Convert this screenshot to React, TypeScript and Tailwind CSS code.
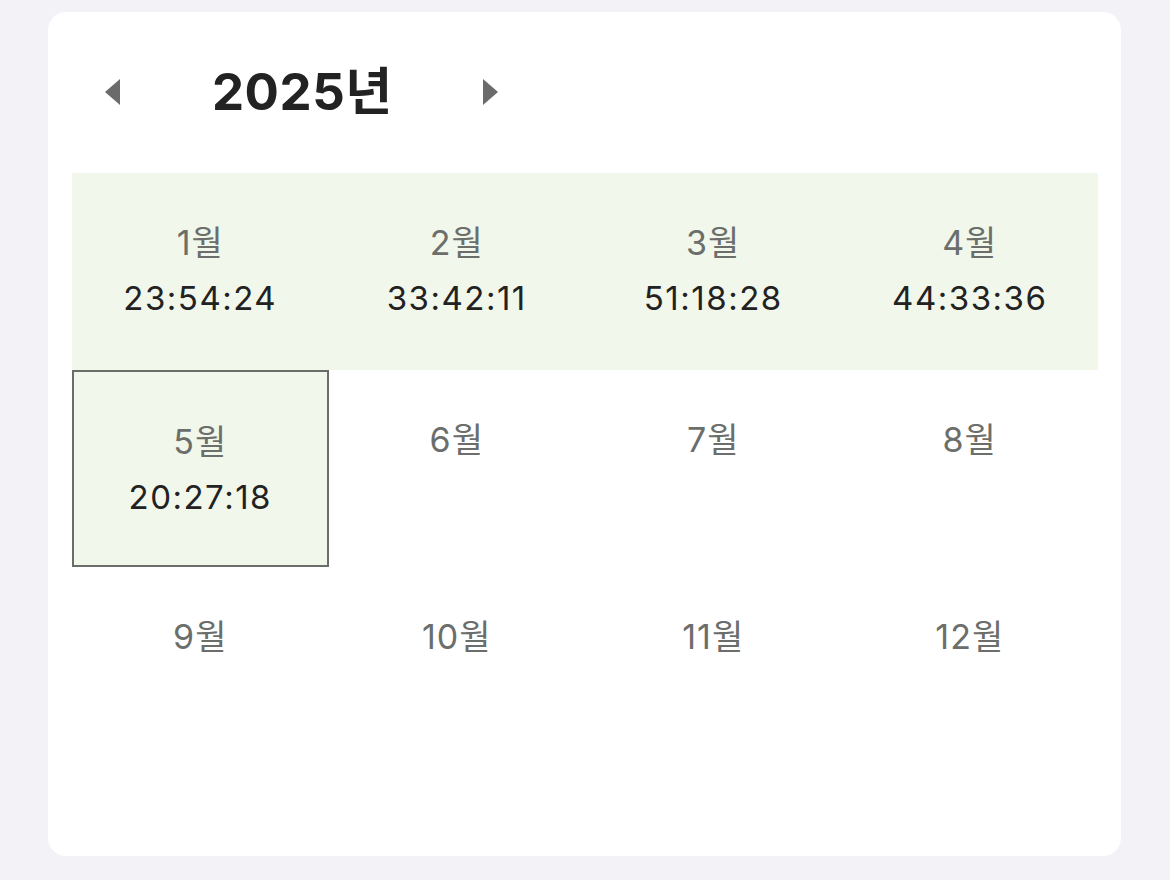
import React from "react";

const months = [
  { m: "1월", t: "23:54:24" },
  { m: "2월", t: "33:42:11" },
  { m: "3월", t: "51:18:28" },
  { m: "4월", t: "44:33:36" },
  { m: "5월", t: "20:27:18", sel: true },
  { m: "6월" },
  { m: "7월" },
  { m: "8월" },
  { m: "9월" },
  { m: "10월" },
  { m: "11월" },
  { m: "12월" },
];

export default function App() {
  return (
    <div
      className="w-[1170px] h-[880px] bg-[#f2f2f7] pt-[12px] pl-[48px]"
      style={{ fontFamily: '"Inter", "Noto Sans CJK KR", sans-serif' }}
    >
      <div className="w-[1073px] h-[844px] bg-white rounded-[18px] px-[24px]">
        <div className="h-[161px] flex items-center pl-[33px] pb-[2px]">
          <button className="w-[15px] h-[26px] flex items-center justify-center">
            <svg width="15" height="26" viewBox="0 0 15 26">
              <polygon points="15,0 15,26 0,13" fill="#6b6b6b" />
            </svg>
          </button>
          <div className="ml-[92px] text-[51px] font-bold text-[#222222] leading-none tracking-[0.5px]">
            2025년
          </div>
          <button className="ml-[90px] w-[15px] h-[26px] flex items-center justify-center">
            <svg width="15" height="26" viewBox="0 0 15 26">
              <polygon points="0,0 15,13 0,26" fill="#6b6b6b" />
            </svg>
          </button>
        </div>
        <div className="grid grid-cols-4 w-[1026px]">
          {months.map((c, i) => (
            <div
              key={i}
              className={
                "h-[197px] flex flex-col items-center pt-[50px] " +
                (i < 4 ? "bg-[#f1f7ea] " : "") +
                (c.sel ? "bg-[#f1f7ea] border-2 border-[#6b6d68] pt-[48px]" : "")
              }
            >
              <div className="text-[34px] leading-[40px] tracking-[1px] text-[#6b6e6a]">{c.m}</div>
              {c.t && (
                <div className="mt-[15px] text-[33px] leading-[40px] tracking-[1.5px] text-[#222222]">
                  {c.t}
                </div>
              )}
            </div>
          ))}
        </div>
      </div>
    </div>
  );
}
